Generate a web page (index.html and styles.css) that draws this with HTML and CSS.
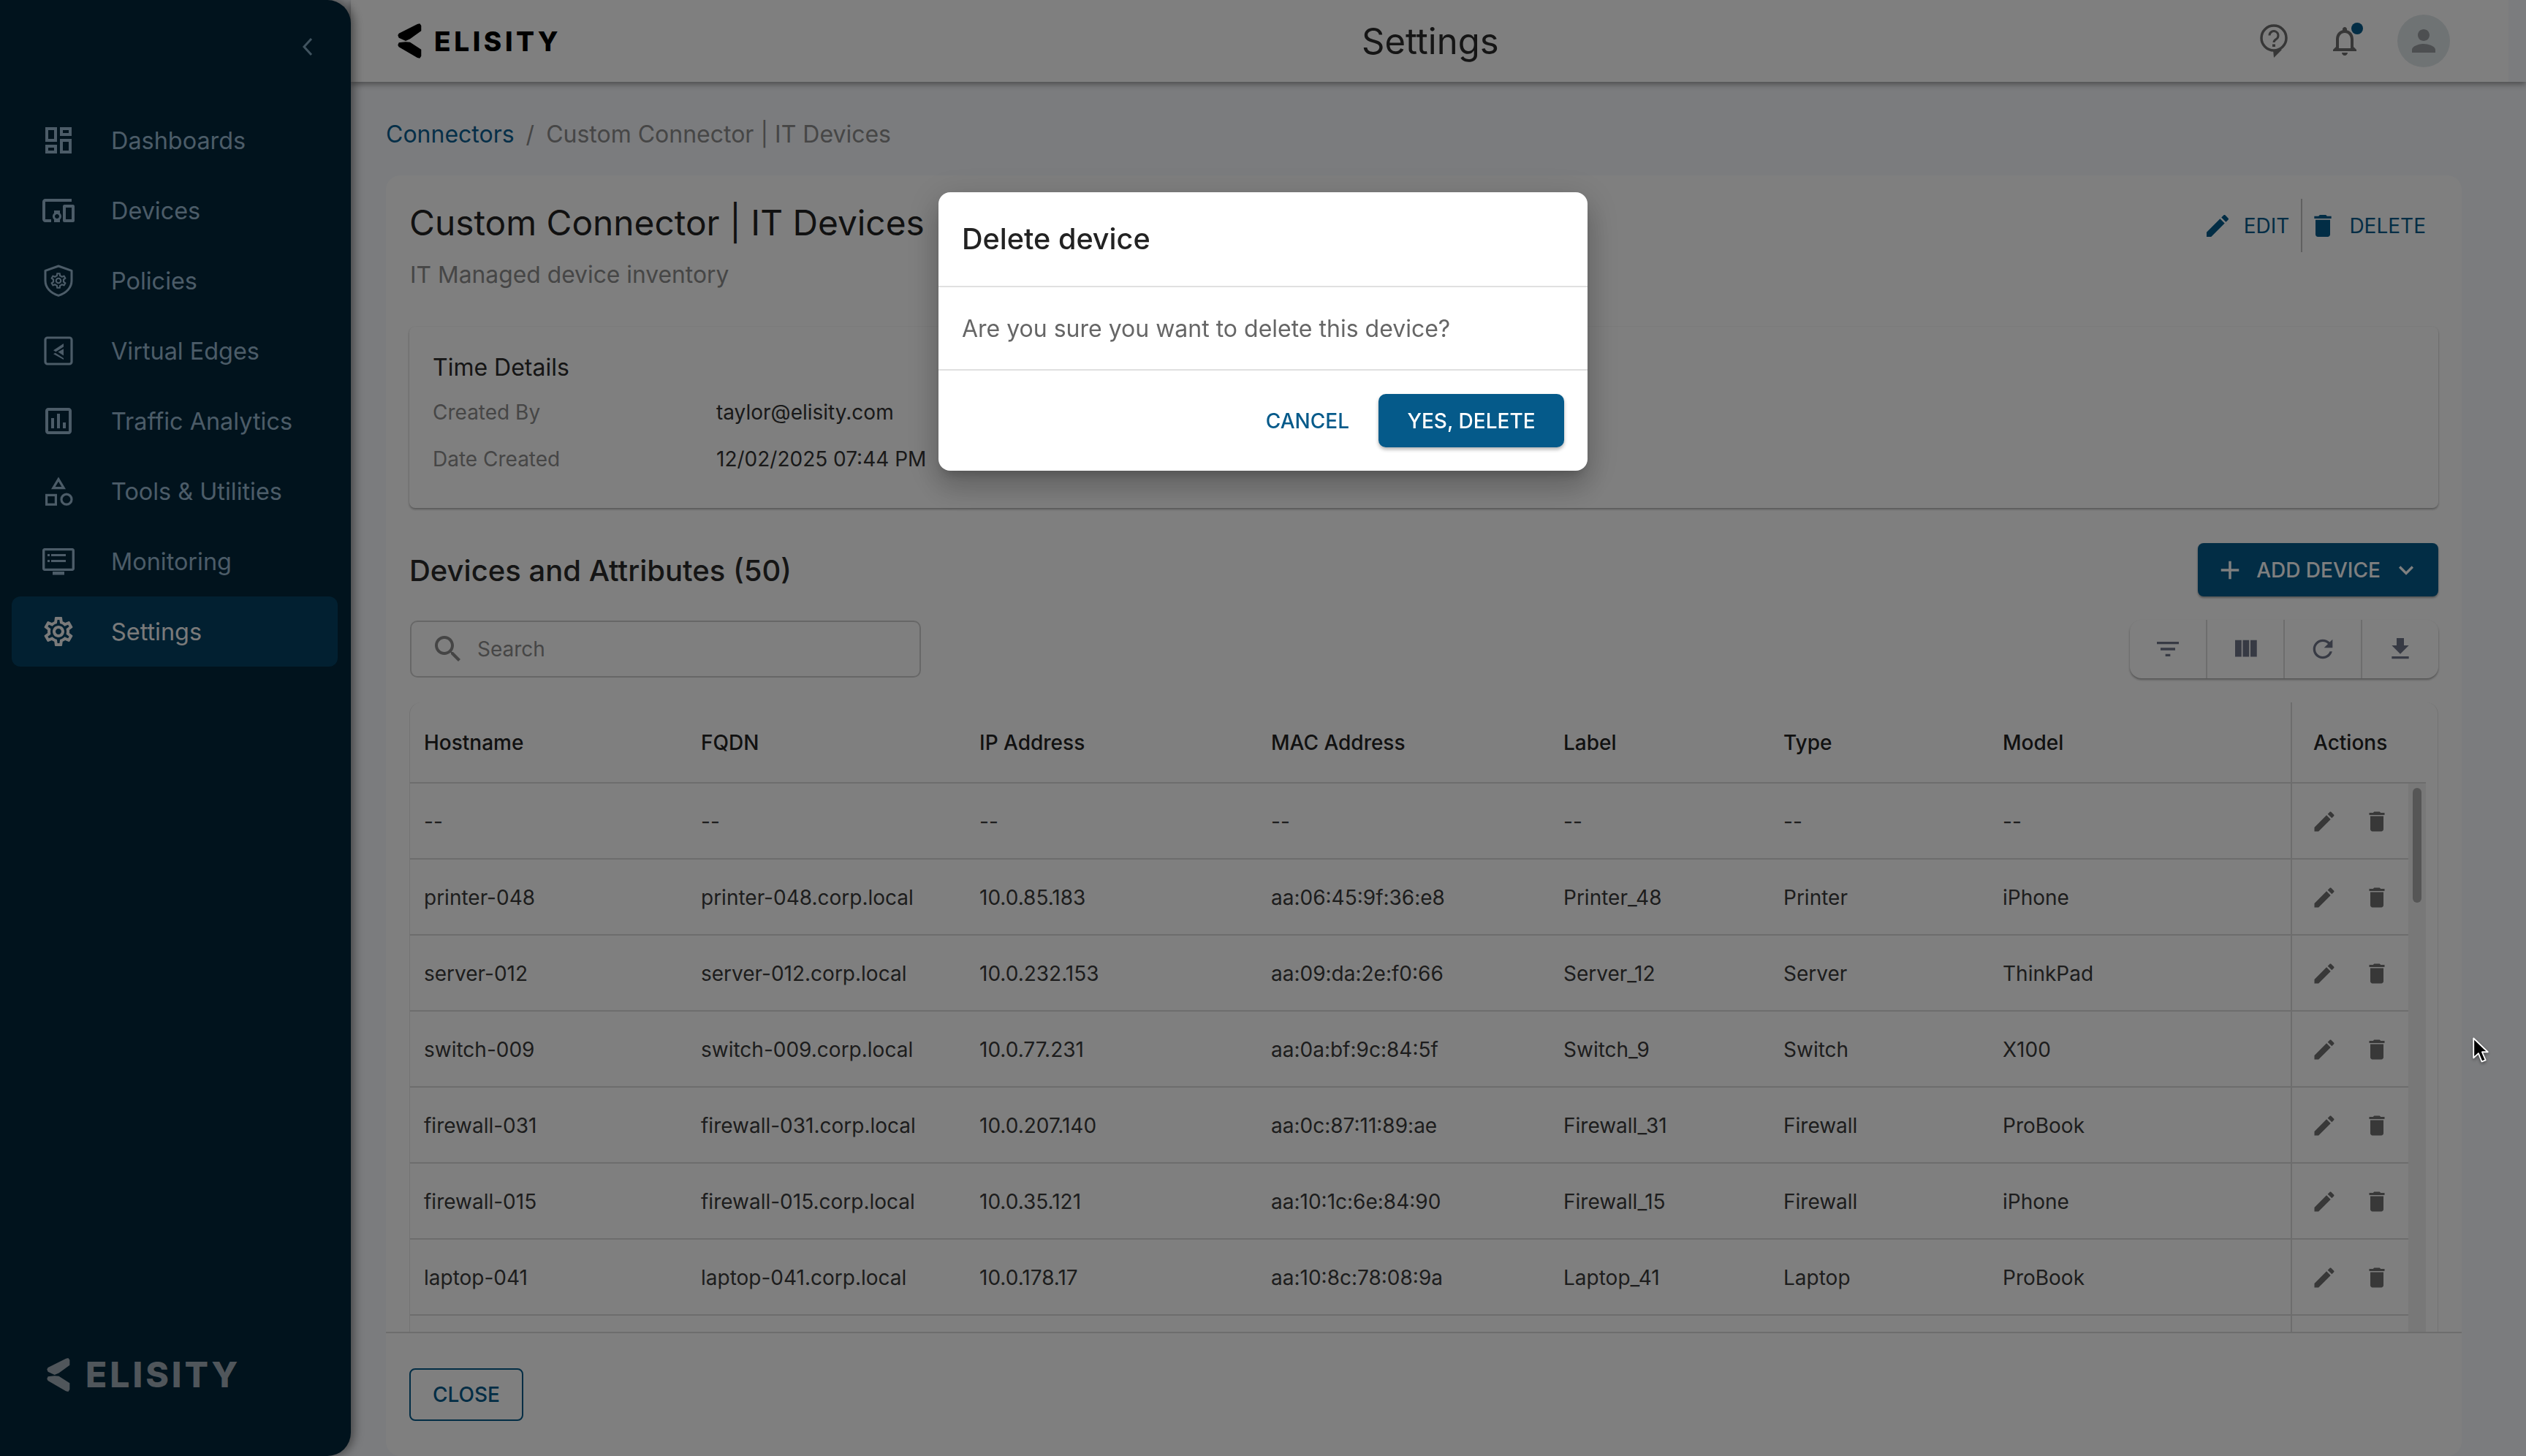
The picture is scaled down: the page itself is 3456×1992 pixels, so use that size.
FILE: index.html
```html
<!DOCTYPE html>
<html>

	<head>
		<meta charset="UTF-8">
		<title>Settings</title>
		<link rel="stylesheet" href="styles.css">
	</head>

	<body>
		<!-- icon sprite -->
		<svg class="sprite" xmlns="http://www.w3.org/2000/svg">
			<symbol id="i-dash" viewBox="0 0 24 24"><path d="M19 5v2h-4V5h4M9 5v6H5V5h4m10 8v6h-4v-6h4M9 17v2H5v-2h4M21 3h-8v6h8V3zM11 3H3v10h8V3zm10 8h-8v10h8V11zm-10 4H3v6h8v-6z"/></symbol>
			<symbol id="i-devices" viewBox="0 0 24 24"><path d="M3 6h18V4H3c-1.1 0-2 .9-2 2v12c0 1.1.9 2 2 2h4v-2H3V6zm10 6H9v1.78c-.61.55-1 1.33-1 2.22s.39 1.67 1 2.22V20h4v-1.78c.61-.55 1-1.34 1-2.22s-.39-1.67-1-2.22V12zm-2 5.5c-.83 0-1.5-.67-1.5-1.5s.67-1.5 1.5-1.5 1.5.67 1.5 1.5-.67 1.5-1.5 1.5zM22 8h-6c-.5 0-1 .5-1 1v10c0 .5.5 1 1 1h6c.5 0 1-.5 1-1V9c0-.5-.5-1-1-1zm-1 10h-4v-8h4v8z"/></symbol>
			<symbol id="i-gear" viewBox="0 0 24 24"><path d="M19.43 12.98c.04-.32.07-.64.07-.98 0-.34-.03-.66-.07-.98l2.11-1.65c.19-.15.24-.42.12-.64l-2-3.46c-.09-.16-.26-.25-.44-.25-.06 0-.12.01-.17.03l-2.49 1c-.52-.4-1.08-.73-1.69-.98l-.38-2.65C14.46 2.18 14.25 2 14 2h-4c-.25 0-.46.18-.49.42l-.38 2.65c-.61.25-1.17.59-1.69.98l-2.49-1c-.06-.02-.12-.03-.18-.03-.17 0-.34.09-.43.25l-2 3.46c-.13.22-.07.49.12.64l2.11 1.65c-.04.32-.07.65-.07.98 0 .33.03.66.07.98l-2.11 1.65c-.19.15-.24.42-.12.64l2 3.46c.09.16.26.25.44.25.06 0 .12-.01.17-.03l2.49-1c.52.4 1.08.73 1.69.98l.38 2.65c.03.24.24.42.49.42h4c.25 0 .46-.18.49-.42l.38-2.65c.61-.25 1.17-.59 1.69-.98l2.49 1c.06.02.12.03.18.03.17 0 .34-.09.43-.25l2-3.46c.12-.22.07-.49-.12-.64l-2.11-1.65zm-1.98-1.71c.04.31.05.52.05.73 0 .21-.02.43-.05.73l-.14 1.13.89.7 1.08.84-.7 1.21-1.27-.51-1.04-.42-.9.68c-.43.32-.84.56-1.25.73l-1.06.43-.16 1.13-.2 1.35h-1.4l-.19-1.35-.16-1.13-1.06-.43c-.43-.18-.83-.41-1.23-.71l-.91-.7-1.06.43-1.27.51-.7-1.21 1.08-.84.89-.7-.14-1.13c-.03-.31-.05-.54-.05-.74s.02-.43.05-.73l.14-1.13-.89-.7-1.08-.84.7-1.21 1.27.51 1.04.42.9-.68c.43-.32.84-.56 1.25-.73l1.06-.43.16-1.13.2-1.35h1.39l.19 1.35.16 1.13 1.06.43c.43.18.83.41 1.23.71l.91.7 1.06-.43 1.27-.51.7 1.21-1.07.85-.89.7.14 1.13zM12 8c-2.21 0-4 1.79-4 4s1.79 4 4 4 4-1.79 4-4-1.79-4-4-4zm0 6c-1.1 0-2-.9-2-2s.9-2 2-2 2 .9 2 2-.9 2-2 2z"/></symbol>
			<symbol id="i-policy" viewBox="0 0 24 24">
				<path d="M12 2 21 5.200v6.800c0 4.800-3.600 8.500-9 10.200-5.400-1.700-9-5.400-9-10.200V5.200z" fill="none" stroke="currentColor" stroke-width="1.500" stroke-linejoin="round"/>
				<use href="#i-gear" x="5.500" y="5.500" width="13" height="13"/>
			</symbol>
			<symbol id="i-edge" viewBox="0 0 24 24">
				<rect x="3" y="3" width="18" height="18" rx="1.500" fill="none" stroke="currentColor" stroke-width="1.600"/>
				<path d="M15.500 7 8.500 11.600l1.700 1 5.300-3.300zM15.500 17 9.800 13.400l-1.300.7 7 3.900zM15.500 15.200l-3.800-2.400 3.800-2.200z"/>
			</symbol>
			<symbol id="i-bars" viewBox="0 0 24 24"><path d="M19 3H5c-1.100 0-2 .9-2 2v14c0 1.100.9 2 2 2h14c1.100 0 2-.9 2-2V5c0-1.100-.9-2-2-2zm0 16H5V5h14v14zM7 10h2v7H7zm4-3h2v10h-2zm4 6h2v4h-2z"/></symbol>
			<symbol id="i-tools" viewBox="0 0 24 24">
				<g fill="none" stroke="currentColor" stroke-width="1.600">
					<path d="M12 3.800 8.400 9.800h7.200z" stroke-linejoin="miter"/>
					<rect x="3.800" y="14.700" width="6.400" height="6.400"/>
					<circle cx="17.500" cy="17.600" r="3.500"/>
				</g>
			</symbol>
			<symbol id="i-monitor" viewBox="0 0 24 24"><path d="M21.500 3h-19C1.700 3 1 3.700 1 4.500v12.500c0 .8.7 1.500 1.500 1.500h19c.8 0 1.500-.7 1.500-1.500V4.500C23 3.700 22.300 3 21.500 3zm-.2 13.900H2.700V4.600h18.600v12.300zM8 19h8v2.200H8zM7 7h10v1.500H7zm0 4h10v1.500H7zM4.500 7H6v1.500H4.500zm0 4H6v1.500H4.500z"/></symbol>
			<symbol id="i-edit" viewBox="0 0 24 24"><path d="M3 17.250V21h3.750L17.810 9.940l-3.750-3.750L3 17.250zM20.710 7.040c.39-.39.39-1.020 0-1.410l-2.340-2.340c-.39-.39-1.020-.39-1.410 0l-1.830 1.830 3.750 3.750 1.830-1.830z"/></symbol>
			<symbol id="i-trash" viewBox="0 0 24 24"><path d="M6 19c0 1.100.9 2 2 2h8c1.100 0 2-.9 2-2V7H6v12zM19 4h-3.500l-1-1h-5l-1 1H5v2h14V4z"/></symbol>
			<symbol id="i-search" viewBox="0 0 24 24"><path d="M15.500 14h-.79l-.28-.27C15.410 12.590 16 11.110 16 9.500 16 5.910 13.090 3 9.500 3S3 5.910 3 9.500 5.910 16 9.500 16c1.610 0 3.090-.59 4.230-1.570l.27.28v.79l5 4.990L20.490 19l-4.990-5zm-6 0C7.010 14 5 11.990 5 9.500S7.010 5 9.500 5 14 7.010 14 9.500 11.990 14 9.500 14z"/></symbol>
			<symbol id="i-filter" viewBox="0 0 24 24"><path d="M10 18h4v-2h-4v2zM3 6v2h18V6H3zm3 7h12v-2H6v2z"/></symbol>
			<symbol id="i-columns" viewBox="0 0 24 24"><path d="M10 18h5V5h-5v13zm-6 0h5V5H4v13zM16 5v13h5V5h-5z"/></symbol>
			<symbol id="i-refresh" viewBox="0 0 24 24"><path d="M17.650 6.350C16.200 4.900 14.210 4 12 4c-4.420 0-7.990 3.580-7.990 8s3.570 8 7.990 8c3.730 0 6.840-2.550 7.730-6h-2.080c-.82 2.330-3.040 4-5.650 4-3.310 0-6-2.690-6-6s2.690-6 6-6c1.660 0 3.140.69 4.220 1.780L13 11h7V4l-2.350 2.350z"/></symbol>
			<symbol id="i-download" viewBox="0 0 24 24"><path d="M19 9h-4V3H9v6H5l7 7 7-7zM5 18v2h14v-2H5z"/></symbol>
			<symbol id="i-bell" viewBox="0 0 24 24"><path d="M12 22c1.100 0 2-.9 2-2h-4c0 1.100.9 2 2 2zm6-6v-5c0-3.070-1.630-5.640-4.500-6.320V4c0-.83-.67-1.500-1.500-1.500s-1.500.67-1.500 1.500v.68C7.640 5.360 6 7.920 6 11v5l-2 2v1h16v-1l-2-2zm-2 1H8v-6c0-2.480 1.510-4.500 4-4.500s4 2.020 4 4.500v6z"/></symbol>
			<symbol id="i-person" viewBox="0 0 24 24"><path d="M12 12c2.210 0 4-1.790 4-4s-1.790-4-4-4-4 1.790-4 4 1.790 4 4 4zm0 2c-2.670 0-8 1.340-8 4v2h16v-2c0-2.660-5.330-4-8-4z"/></symbol>
			<symbol id="i-add" viewBox="0 0 24 24"><path d="M19 13h-6v6h-2v-6H5v-2h6V5h2v6h6v2z"/></symbol>
			<symbol id="i-down" viewBox="0 0 24 24"><path d="M7.410 8.590 12 13.170l4.590-4.580L18 10l-6 6-6-6z"/></symbol>
			<symbol id="i-mark" viewBox="0 0 34 48">
				<path d="M28 1 31.300.3 33.300 3v7.300L18 21.300 12 24 2.700 19.700 1.300 16.300 2.700 13.700zM2.700 26.300 1.300 29.700 2.700 32.300 28 47 31.300 47.700 33.300 44.700V35.700L18 25.700 12 25.300z"/>
			</symbol>
		</svg>

		<div class="app">
			<aside class="sidebar">
				<div class="collapse">
					<svg class="collapse-icon" viewBox="0 0 16 26"><path d="M13 2 3 13l10 11" fill="none" stroke="currentColor" stroke-width="3"/></svg>
				</div>
				<nav class="nav">
					<a class="nav-item"><svg class="icon48"><use href="#i-dash"/></svg><span>Dashboards</span></a>
					<a class="nav-item"><svg class="icon48"><use href="#i-devices"/></svg><span>Devices</span></a>
					<a class="nav-item"><svg class="icon48"><use href="#i-policy"/></svg><span>Policies</span></a>
					<a class="nav-item"><svg class="icon48"><use href="#i-edge"/></svg><span>Virtual Edges</span></a>
					<a class="nav-item"><svg class="icon48"><use href="#i-bars"/></svg><span>Traffic Analytics</span></a>
					<a class="nav-item"><svg class="icon48"><use href="#i-tools"/></svg><span>Tools &amp; Utilities</span></a>
					<a class="nav-item"><svg class="icon48"><use href="#i-monitor"/></svg><span>Monitoring</span></a>
					<a class="nav-item active"><svg class="icon48"><use href="#i-gear"/></svg><span>Settings</span></a>
				</nav>
				<div class="side-logo">
					<svg class="side-mark"><use href="#i-mark"/></svg>
					<span class="side-word">ELISITY</span>
				</div>
			</aside>

			<div class="main">
				<header class="topbar">
					<div class="logo">
						<svg class="logo-mark"><use href="#i-mark"/></svg>
						<span class="logo-word">ELISITY</span>
					</div>
					<div class="top-title">Settings</div>
					<div class="top-icons">
						<svg class="help-icon" viewBox="0 0 38 46">
							<circle cx="19" cy="19" r="17" fill="none" stroke="currentColor" stroke-width="3.500"/>
							<path d="M18 35h12l-11 11z"/>
							<path d="M13 15.500a6 6 0 1 1 9.300 5c-2.300 1.500-3.300 2.300-3.300 4.500" fill="none" stroke="currentColor" stroke-width="3"/>
							<rect x="17" y="27.500" width="4" height="3.500"/>
						</svg>
						<div class="bell">
							<svg class="icon48"><use href="#i-bell"/></svg>
							<span class="bell-dot"></span>
						</div>
						<div class="avatar"><svg class="icon48"><use href="#i-person"/></svg></div>
					</div>
					<div class="top-gutter"></div>
				</header>

				<div class="content">
					<div class="crumbs">
						<a class="crumb-link">Connectors</a>
						<span class="crumb-sep">/</span>
						<span>Custom Connector | IT Devices</span>
					</div>

					<div class="card">
						<div class="card-body">
							<div class="card-head">
								<div>
									<h1 class="card-title">Custom Connector | IT Devices</h1>
									<p class="card-sub">IT Managed device inventory</p>
								</div>
								<div class="head-actions">
									<a class="head-btn"><svg class="icon40"><use href="#i-edit"/></svg>EDIT</a>
									<span class="head-sep"></span>
									<a class="head-btn"><svg class="icon40"><use href="#i-trash"/></svg>DELETE</a>
								</div>
							</div>

							<div class="time-panel">
								<div class="time-title">Time Details</div>
								<div class="time-row"><span class="time-key">Created By</span><span>taylor@elisity.com</span></div>
								<div class="time-row"><span class="time-key">Date Created</span><span>12/02/2025 07:44 PM</span></div>
							</div>

							<div class="section-head">
								<h2 class="section-title">Devices and Attributes (50)</h2>
								<button class="add-btn">
									<svg class="icon42"><use href="#i-add"/></svg>
									<span>ADD DEVICE</span>
									<svg class="icon40"><use href="#i-down"/></svg>
								</button>
							</div>

							<div class="filter-row">
								<div class="search">
									<svg class="icon48"><use href="#i-search"/></svg>
									<span>Search</span>
								</div>
								<div class="toolbar">
									<div class="tool"><svg class="icon40"><use href="#i-filter"/></svg></div>
									<div class="tool"><svg class="icon42"><use href="#i-columns"/></svg></div>
									<div class="tool"><svg class="icon40"><use href="#i-refresh"/></svg></div>
									<div class="tool"><svg class="icon40"><use href="#i-download"/></svg></div>
								</div>
							</div>

							<div class="table">
								<div class="t-head">
									<div>Hostname</div><div>FQDN</div><div>IP Address</div><div>MAC Address</div><div>Label</div><div>Type</div><div>Model</div><div class="t-actions-head">Actions</div>
								</div>
								<div class="t-scroll">
									<div class="t-rows">
										<div class="t-row"><div>--</div><div>--</div><div>--</div><div>--</div><div>--</div><div>--</div><div>--</div><div class="t-actions"><svg class="icon36"><use href="#i-edit"/></svg><svg class="icon36"><use href="#i-trash"/></svg></div></div>
										<div class="t-row"><div>printer-048</div><div>printer-048.corp.local</div><div>10.0.85.183</div><div>aa:06:45:9f:36:e8</div><div>Printer_48</div><div>Printer</div><div>iPhone</div><div class="t-actions"><svg class="icon36"><use href="#i-edit"/></svg><svg class="icon36"><use href="#i-trash"/></svg></div></div>
										<div class="t-row"><div>server-012</div><div>server-012.corp.local</div><div>10.0.232.153</div><div>aa:09:da:2e:f0:66</div><div>Server_12</div><div>Server</div><div>ThinkPad</div><div class="t-actions"><svg class="icon36"><use href="#i-edit"/></svg><svg class="icon36"><use href="#i-trash"/></svg></div></div>
										<div class="t-row"><div>switch-009</div><div>switch-009.corp.local</div><div>10.0.77.231</div><div>aa:0a:bf:9c:84:5f</div><div>Switch_9</div><div>Switch</div><div>X100</div><div class="t-actions"><svg class="icon36"><use href="#i-edit"/></svg><svg class="icon36"><use href="#i-trash"/></svg></div></div>
										<div class="t-row"><div>firewall-031</div><div>firewall-031.corp.local</div><div>10.0.207.140</div><div>aa:0c:87:11:89:ae</div><div>Firewall_31</div><div>Firewall</div><div>ProBook</div><div class="t-actions"><svg class="icon36"><use href="#i-edit"/></svg><svg class="icon36"><use href="#i-trash"/></svg></div></div>
										<div class="t-row"><div>firewall-015</div><div>firewall-015.corp.local</div><div>10.0.35.121</div><div>aa:10:1c:6e:84:90</div><div>Firewall_15</div><div>Firewall</div><div>iPhone</div><div class="t-actions"><svg class="icon36"><use href="#i-edit"/></svg><svg class="icon36"><use href="#i-trash"/></svg></div></div>
										<div class="t-row"><div>laptop-041</div><div>laptop-041.corp.local</div><div>10.0.178.17</div><div>aa:10:8c:78:08:9a</div><div>Laptop_41</div><div>Laptop</div><div>ProBook</div><div class="t-actions"><svg class="icon36"><use href="#i-edit"/></svg><svg class="icon36"><use href="#i-trash"/></svg></div></div>
										<div class="t-row"><div></div><div></div><div></div><div></div><div></div><div></div><div></div><div class="t-actions"></div></div>
									</div>
									<div class="t-bar"><div class="t-thumb"></div></div>
								</div>
							</div>
						</div>

						<div class="card-foot">
							<button class="close-btn">CLOSE</button>
						</div>
					</div>
				</div>
			</div>
		</div>

		<!-- dialog -->
		<div class="overlay">
			<div class="modal">
				<div class="modal-title">Delete device</div>
				<div class="modal-text">Are you sure you want to delete this device?</div>
				<div class="modal-foot">
					<button class="cancel-btn">CANCEL</button>
					<button class="confirm-btn">YES, DELETE</button>
				</div>
			</div>
		</div>

		<svg class="cursor" viewBox="0 0 22 36">
			<path d="M2 1.500v26l6.500-6 4.500 11 5-2-4.700-10.800H21z" fill="#000" stroke="#fff" stroke-width="1.800" stroke-linejoin="round"/>
		</svg>
	</body>

</html>
```

FILE: styles.css
```css
* {
	margin: 0;
	padding: 0;
	box-sizing: border-box;
}

html,
body {
	width: 3456px;
	height: 1992px;
	overflow: hidden;
}

body {
	font-family: Inter, "Noto Sans", "Liberation Sans", sans-serif;
	font-size: 28px;
	color: #3a3a3a;
	background: #f6f8fc;
}

button {
	font-family: inherit;
	border: none;
	background: none;
}

svg {
	fill: currentColor;
	flex: none;
}

.sprite {
	display: none;
}

.icon48 {
	width: 48px;
	height: 48px;
}

.icon42 {
	width: 42px;
	height: 42px;
}

.icon40 {
	width: 40px;
	height: 40px;
}

.icon36 {
	width: 36px;
	height: 36px;
}

.app {
	display: flex;
	height: 1992px;
}

/* sidebar */
.sidebar {
	width: 480px;
	flex: none;
	display: flex;
	flex-direction: column;
	background: #02263a;
	color: #98b8d0;
	border-radius: 0 32px 32px 0;
	box-shadow: 4px 0 14px rgba(0, 0, 0, .45);
	position: relative;
	z-index: 2;
}

.collapse {
	height: 144px;
	display: flex;
	justify-content: flex-end;
	padding: 51px 51px 0 0;
	color: #80a6be;
}

.collapse-icon {
	width: 16px;
	height: 26px;
}

.nav-item {
	height: 96px;
	width: 446px;
	margin-left: 16px;
	padding-left: 40px;
	display: flex;
	align-items: center;
	gap: 48px;
	font-size: 32.4px;
	border-radius: 12px;
}

.nav-item.active {
	background: #044062;
	color: #f5f5f5;
}

.side-logo {
	margin-top: auto;
	margin-bottom: 87px;
	padding-left: 63px;
	display: flex;
	align-items: center;
	gap: 21px;
	color: #a0acb6;
}

.side-mark {
	width: 33px;
	height: 48px;
}

.side-word {
	font-size: 48px;
	font-weight: 800;
	letter-spacing: 4px;
	line-height: 48px;
}

/* top bar */
.main {
	flex: 1;
	min-width: 0;
	display: flex;
	flex-direction: column;
}

.topbar {
	height: 112px;
	flex: none;
	display: flex;
	align-items: center;
	background: #fff;
	box-shadow: 0 3px 8px rgba(0, 0, 0, .4);
	position: relative;
	z-index: 1;
}

.logo {
	width: 1000px;
	padding-left: 63px;
	display: flex;
	align-items: center;
	gap: 17px;
	color: #000;
}

.logo-mark {
	width: 34px;
	height: 48px;
}

.logo-word {
	font-size: 37px;
	font-weight: 800;
	letter-spacing: 4.6px;
}

.top-title {
	flex: 1;
	padding-left: 383px;
	font-size: 49px;
	color: #2a2a2a;
}

.top-icons {
	display: flex;
	align-items: center;
	color: #6e6e6e;
	margin-right: 80px;
}

.help-icon {
	width: 38px;
	height: 46px;
	margin-right: 54px;
}

.bell {
	width: 48px;
	height: 48px;
	margin-right: 48px;
	position: relative;
}

.bell-dot {
	position: absolute;
	top: -1px;
	right: -1px;
	width: 16px;
	height: 16px;
	border-radius: 50%;
	background: #055a8a;
}

.avatar {
	width: 72px;
	height: 72px;
	border-radius: 50%;
	background: #dfe6e8;
	color: #9a9ea2;
	display: flex;
	align-items: center;
	justify-content: center;
}

.top-gutter {
	width: 24px;
	height: 112px;
	background: #f6f8fc;
}

/* page */
.content {
	flex: 1;
	min-height: 0;
	display: flex;
	flex-direction: column;
	padding: 0 88px 0 48px;
}

.crumbs {
	height: 128px;
	flex: none;
	padding-top: 52px;
	line-height: 40px;
	font-size: 32px;
	color: #8c8c8c;
	white-space: nowrap;
}

.crumb-link {
	color: #0a5f90;
}

.crumb-sep {
	margin: 0 7px;
}

.card {
	flex: 1;
	min-height: 0;
	display: flex;
	flex-direction: column;
	background: #fff;
	border-radius: 20px;
}

.card-body {
	flex: 1;
	min-height: 0;
	display: flex;
	flex-direction: column;
	overflow: hidden;
	padding: 33px 32px 0;
}

.card-head {
	height: 174px;
	flex: none;
	display: flex;
	justify-content: space-between;
}

.card-title {
	font-size: 47.8px;
	font-weight: 400;
	line-height: 64px;
	color: #222;
}

.card-sub {
	margin-top: 17px;
	line-height: 44px;
	font-size: 31.8px;
	color: #8c8c8c;
	padding-left: 1px;
}

.head-actions {
	display: flex;
	align-items: center;
	height: 73px;
	margin-top: -1px;
	padding-right: 17px;
	color: #055a8a;
}

.head-btn {
	display: flex;
	align-items: center;
	gap: 16px;
}

.head-sep {
	width: 2px;
	height: 73px;
	margin: 0 8px 0 16px;
	background: #c0c0c0;
}

.time-panel {
	height: 248px;
	flex: none;
	padding: 36px 32px 0;
	border-radius: 8px;
	background: #fff;
	box-shadow: 0 2px 3px rgba(0, 0, 0, .3), 0 0 2px rgba(0, 0, 0, .08);
	color: #333;
}

.time-title {
	font-size: 32px;
	line-height: 40px;
	margin-bottom: 9px;
	color: #2a2a2a;
}

.time-row {
	height: 64px;
	display: flex;
	align-items: center;
}

.time-key {
	width: 388px;
	color: #8c8c8c;
}

.section-head {
	margin-top: 48px;
	flex: none;
	display: flex;
	align-items: center;
	justify-content: space-between;
}

.section-title {
	font-size: 40px;
	font-weight: 500;
	color: #2a2a2a;
	padding-top: 1px;
}

.add-btn {
	width: 329px;
	height: 73px;
	padding: 1px 24px 0 23px;
	display: flex;
	align-items: center;
	justify-content: space-between;
	font-size: 28px;
	font-weight: 500;
	color: #fff;
	background: #055a8a;
	border-radius: 8px;
	box-shadow: 0 2px 3px rgba(0, 0, 0, .35);
}

.filter-row {
	margin-top: 32px;
	flex: none;
	display: flex;
	align-items: center;
	justify-content: space-between;
}

.search {
	width: 699px;
	height: 78px;
	margin-left: 1px;
	padding: 0 0 1px 26px;
	display: flex;
	align-items: center;
	gap: 16px;
	border: 2px solid #cfcfcf;
	border-radius: 10px;
	color: #8c8c8c;
}

.search svg {
	color: #8a8a8a;
}

.toolbar {
	width: 422px;
	height: 80px;
	display: flex;
	color: #6f7489;
	border-radius: 16px;
	box-shadow: 0 2px 3px rgba(0, 0, 0, .35);
}

.tool {
	flex: 1;
	display: flex;
	align-items: center;
	justify-content: center;
	border-left: 2px solid #dadada;
}

.tool:first-child {
	border-left: none;
}

/* table */
.table {
	margin-top: 33px;
	flex: 1;
	min-height: 0;
	display: flex;
	flex-direction: column;
	padding-right: 16px;
	border-right: 1px solid #e6e6e6;
	border-left: 1px solid #e6e6e6;
	border-radius: 16px 16px 0 0;
	color: #3a3a3a;
}

.t-head {
	height: 111px;
	flex: none;
	display: grid;
	grid-template-columns: 379px 381px 399px 400px 301px 300px 413px 186px;
	align-items: center;
	border-bottom: 2px solid #dadada;
	font-weight: 500;
	color: #222;
}

.t-head > div {
	padding-left: 19px;
}

.t-head .t-actions-head {
	height: 100%;
	display: flex;
	align-items: center;
	padding-left: 29px;
	border-left: 2px solid #dadada;
}

.t-scroll {
	flex: 1;
	min-height: 0;
	display: flex;
}

.t-rows {
	flex: 1;
	min-width: 0;
}

.t-row {
	height: 104px;
	display: grid;
	grid-template-columns: 379px 381px 399px 400px 301px 300px 413px 162px;
	align-items: center;
	border-bottom: 2px solid #dadada;
}

.t-row > div {
	padding: 2px 0 0 19px;
}

.t-row .t-actions {
	height: 100%;
	display: flex;
	align-items: center;
	gap: 36px;
	padding-left: 26px;
	border-left: 2px solid #dadada;
	color: #707070;
}

.t-bar {
	width: 24px;
	flex: none;
	padding: 6px 6px 0;
	background: #f0f0f0;
}

.t-thumb {
	height: 157px;
	border-radius: 6px;
	background: #adadad;
}

.card-foot {
	height: 170px;
	flex: none;
	padding: 48px 32px 0;
	border-top: 2px solid #dadada;
}

.close-btn {
	width: 156px;
	height: 72px;
	border: 2px solid #055a8a;
	border-radius: 8px;
	color: #055a8a;
	font-size: 28px;
	font-weight: 500;
}

/* dialog */
.overlay {
	position: fixed;
	left: 0;
	top: 0;
	width: 3456px;
	height: 1992px;
	z-index: 5;
	display: flex;
	justify-content: center;
	padding-top: 263px;
	background: rgba(0, 0, 0, .5);
}

.modal {
	width: 888px;
	height: 381px;
	display: flex;
	flex-direction: column;
	background: #fff;
	border-radius: 16px;
	box-shadow: 0 11px 15px -7px rgba(0, 0, 0, .2), 0 24px 38px 3px rgba(0, 0, 0, .14), 0 9px 46px 8px rgba(0, 0, 0, .12);
}

.modal-title {
	height: 130px;
	flex: none;
	display: flex;
	align-items: center;
	padding-left: 32px;
	font-size: 39.6px;
	font-weight: 500;
	color: #222;
	border-bottom: 2px solid #e0e0e0;
}

.modal-text {
	height: 114px;
	flex: none;
	display: flex;
	align-items: center;
	padding-left: 32px;
	font-size: 32px;
	color: #666;
	border-bottom: 2px solid #e0e0e0;
}

.modal-foot {
	flex: 1;
	display: flex;
	justify-content: flex-end;
	align-items: flex-start;
	padding: 32px 32px 0 0;
}

.cancel-btn {
	height: 73px;
	margin-right: 40px;
	font-size: 28px;
	font-weight: 500;
	color: #055a8a;
}

.confirm-btn {
	width: 254px;
	height: 73px;
	font-size: 28px;
	font-weight: 500;
	color: #fff;
	background: #055a8a;
	border-radius: 10px;
	box-shadow: 0 3px 5px rgba(0, 0, 0, .3);
}

/* mouse pointer caught in the shot */
.cursor {
	position: fixed;
	left: 3382px;
	top: 1419px;
	width: 23px;
	height: 37px;
	z-index: 9;
	filter: drop-shadow(0 2px 2px rgba(0, 0, 0, .4));
}
```
